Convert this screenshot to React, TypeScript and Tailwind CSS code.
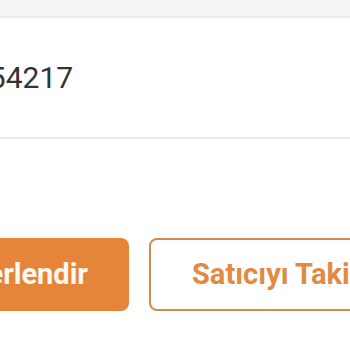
export default function App() {
  return (
    <div className="w-[350px] h-[350px] overflow-hidden bg-white font-['Roboto',sans-serif]">
      <div className="h-[18px] bg-[#f4f4f4] border-b-2 border-[#ebebeb]" />

      <div className="h-[121px] flex items-center border-b-2 border-[#ebebeb]">
        <span className="ml-[-28px] text-[30px] leading-none text-[#333333]">
          654217
        </span>
      </div>

      <div className="mt-[99px] flex gap-[20px] whitespace-nowrap">
        <button className="ml-[-171px] w-[300px] h-[73px] shrink-0 flex items-center justify-end pr-[41px] rounded-[8px] bg-[#e5853a] text-[#fff8ee] text-[29px] font-bold">
          Değerlendir
        </button>
        <button className="w-[280px] h-[73px] shrink-0 flex items-center pl-[41px] rounded-[8px] border-2 border-[#d08b52] bg-white text-[#e08a42] text-[29px] font-bold">
          Satıcıyı Takip Et
        </button>
      </div>
    </div>
  );
}
